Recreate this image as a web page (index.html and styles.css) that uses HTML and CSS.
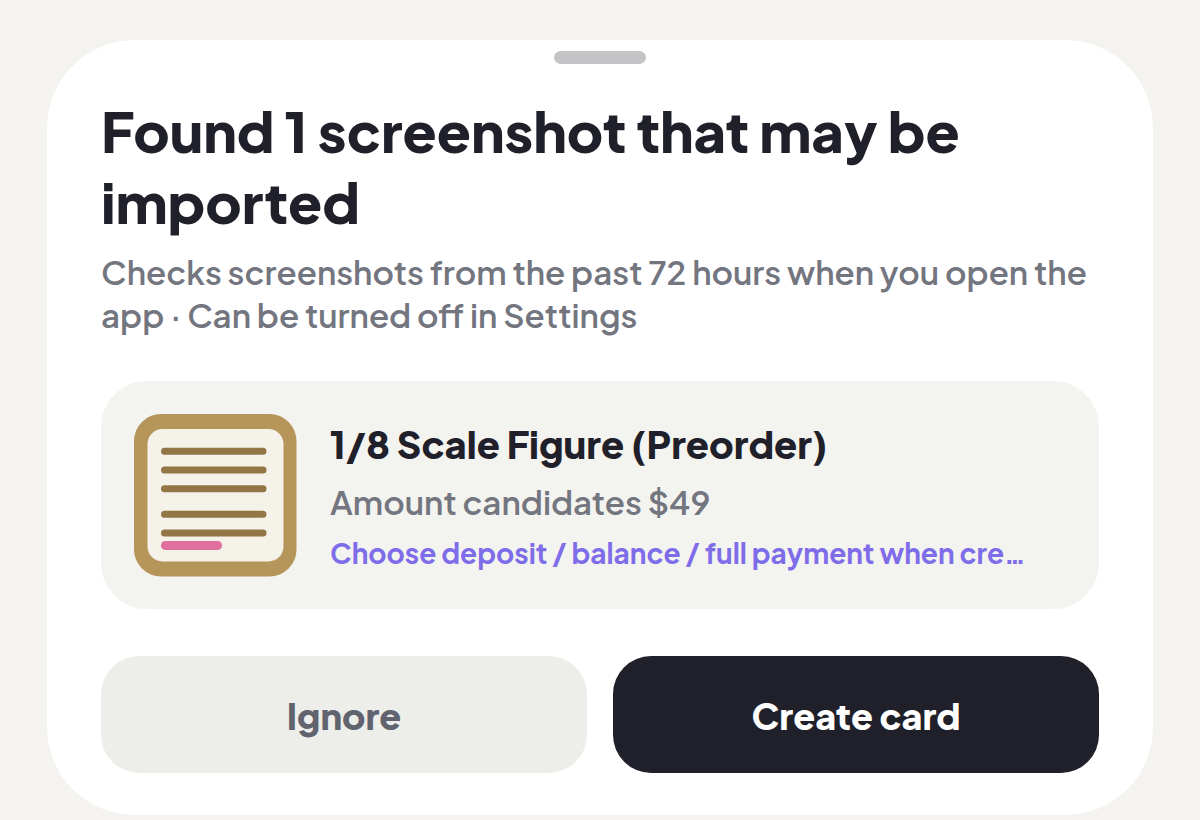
FILE: index.html
```html
<!DOCTYPE html>
<html lang="en">
<head>
<meta charset="utf-8">
<meta name="viewport" content="width=device-width, initial-scale=1">
<title>Import screenshot</title>
<link rel="stylesheet" href="styles.css">
</head>
<body>
<main class="sheet">
  <div class="handle"></div>
  <h1 class="title">Found 1 screenshot that may be imported</h1>
  <p class="subtitle">Checks screenshots from the past 72 hours when you open the app · Can be turned off in Settings</p>
  <section class="item">
    <svg class="thumb" viewBox="0 0 164 164" aria-hidden="true">
      <rect x="1" y="1" width="162.500" height="162.500" rx="27" fill="#b59559"/>
      <rect x="14.500" y="16" width="136" height="132.500" rx="15" fill="#f5f2e9"/>
      <g stroke="#937645" stroke-width="7" stroke-linecap="round">
        <path d="M31.500 38.300H130M31.500 57H130M31.500 75.700H130M31.500 101.300H130M31.500 120H130"/>
      </g>
      <rect x="28" y="128" width="61" height="9" rx="4.500" fill="#e06f9f"/>
    </svg>
    <div class="details">
      <h2 class="name">1/8 Scale Figure (Preorder)</h2>
      <p class="amount">Amount candidates $49</p>
      <p class="hint">Choose deposit / balance / full payment when cre…</p>
    </div>
  </section>
  <div class="actions">
    <button class="button ignore" type="button">Ignore</button>
    <button class="button create" type="button">Create card</button>
  </div>
</main>
</body>
</html>
```
FILE: styles.css
```css
* { box-sizing: border-box; }
body {
  margin: 0;
  padding: 40px 47px 5px;
  background: #f4f3ef;
  color: #1f2029;
  font-family: "Plus Jakarta Sans", Inter, "Open Sans", sans-serif;
}
.sheet {
  padding: 11px 54px 42px;
  border-radius: 88px;
  background: #fff;
}
.handle {
  width: 92px;
  height: 13px;
  margin: 0 auto;
  border-radius: 7px;
  background: #c5c5c8;
}
.title {
  margin: 31px 0 0;
  font-size: 56px;
  line-height: 71px;
  font-weight: 800;
}
.subtitle {
  margin: 13px 0 0;
  color: #73757f;
  font-size: 33px;
  line-height: 43px;
  font-weight: 600;
}
.item {
  display: flex;
  align-items: center;
  gap: 33px;
  margin-top: 45px;
  padding: 32px;
  border-radius: 46px;
  background: #f3f3ef;
}
.thumb { flex: none; width: 164px; height: 164px; }
.details { flex: 1; min-width: 0; padding-top: 2px; }
.name {
  margin: 0;
  font-size: 38px;
  line-height: 56px;
  font-weight: 800;
}
.amount {
  margin: 2px 0 0;
  color: #73757f;
  font-size: 33px;
  line-height: 56px;
  font-weight: 600;
}
.hint {
  margin: 0;
  color: #7e6ce9;
  font-size: 28px;
  line-height: 46px;
  font-weight: 700;
}
.actions {
  display: grid;
  grid-template-columns: 1fr 1fr;
  gap: 26px;
  margin-top: 47px;
}
.button {
  height: 117px;
  padding: 2px 20px 0;
  border: 0;
  border-radius: 38px;
  font: inherit;
  font-size: 36px;
  font-weight: 800;
}
.ignore { background: #edeee9; color: #61636f; }
.create { background: #1f2029; color: #fff; }
```
